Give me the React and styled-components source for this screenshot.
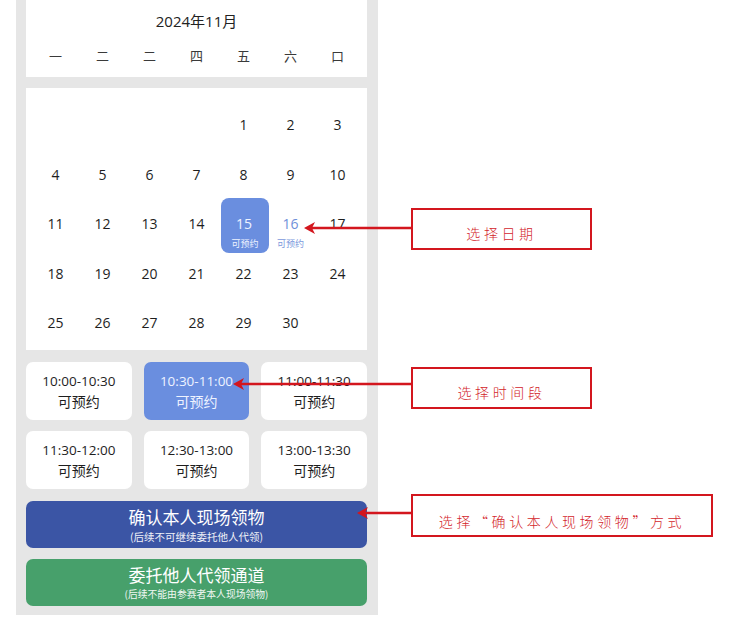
import React from "react";
import styled, { createGlobalStyle } from "styled-components";

const Global = createGlobalStyle`
  html, body { margin: 0; padding: 0; background: #ffffff; }
  body { font-family: "Open Sans", "Noto Sans CJK SC", sans-serif; }
`;

const Page = styled.div`
  position: relative;
  width: 747px;
  height: 627px;
  background: #fff;
`;

const Phone = styled.div`
  margin-left: 16px;
  width: 362px;
  height: 615px;
  box-sizing: border-box;
  background: #e6e6e6;
  padding: 0 11px 0 10px;
  display: flex;
  flex-direction: column;
`;

const HeaderCard = styled.div`
  background: #fff;
  height: 77px;
  box-sizing: border-box;
  padding: 11px 6px 0;
  display: flex;
  flex-direction: column;
  align-items: stretch;
`;

const MonthTitle = styled.div`
  text-align: center;
  font-size: 15px;
  line-height: 20px;
  color: #222;
  font-family: "Open Sans", "Noto Sans CJK SC", sans-serif;
`;

const WeekRow = styled.div`
  margin-top: 15px;
  display: grid;
  grid-template-columns: repeat(7, 47px);
  justify-content: center;
`;

const WeekDay = styled.div`
  text-align: center;
  font-size: 13px;
  line-height: 20px;
  color: #3a3a3a;
  font-family: "Noto Sans CJK SC", sans-serif;
  font-weight: 400;
`;

const CalendarCard = styled.div`
  margin-top: 11px;
  background: #fff;
  height: 262px;
  box-sizing: border-box;
  padding: 12px 6px 0;
`;

const DayGrid = styled.div`
  display: grid;
  grid-template-columns: repeat(7, 47px);
  grid-template-rows: repeat(5, 49.5px);
  justify-content: center;
`;

const DayCell = styled.div`
  display: flex;
  flex-direction: column;
  align-items: center;
`;

const DayBox = styled.div`
  width: 48px;
  height: 55px;
  margin-top: -1px;
  margin-left: ${(p) => (p.$selected ? "3px" : "0")};
  box-sizing: border-box;
  padding-top: 17px;
  border-radius: 8px;
  background: ${(p) => (p.$selected ? "#6a8edf" : "transparent")};
  display: flex;
  flex-direction: column;
  align-items: center;
  flex-shrink: 0;
`;

const DayNum = styled.div`
  font-size: 14px;
  line-height: 18px;
  color: ${(p) => (p.$selected ? "#eef3ff" : p.$avail ? "#6f90d9" : "#1e1e1e")};
  margin-left: ${(p) => (p.$selected ? "-2px" : "0")};
`;

const DaySub = styled.div`
  margin-top: 5px;
  font-size: 9px;
  line-height: 11px;
  font-family: "Noto Sans CJK SC", sans-serif;
  color: ${(p) => (p.$selected ? "#eef3ff" : "#7b98dc")};
  white-space: nowrap;
`;

const SlotGrid = styled.div`
  margin-top: 12px;
  display: grid;
  grid-template-columns: repeat(3, 1fr);
  grid-template-rows: repeat(2, 58px);
  column-gap: 12px;
  row-gap: 11px;
`;

const Slot = styled.div`
  border-radius: 7px;
  background: ${(p) => (p.$selected ? "#6a8edf" : "#fff")};
  color: ${(p) => (p.$selected ? "#eef3ff" : "#1e1e1e")};
  display: flex;
  flex-direction: column;
  align-items: center;
  justify-content: center;
  line-height: 20px;
`;

const SlotTime = styled.div`
  font-size: 13.5px;
  font-family: "Open Sans", "Noto Sans CJK SC", sans-serif;
`;

const SlotState = styled.div`
  font-size: 14px;
  font-family: "Noto Sans CJK SC", sans-serif;
`;

const ActionButton = styled.div`
  margin-top: ${(p) => p.$gap}px;
  height: 47px;
  border-radius: 7px;
  background: ${(p) => p.$bg};
  color: #fff;
  display: flex;
  flex-direction: column;
  align-items: center;
  justify-content: center;
  font-family: "Noto Sans CJK SC", sans-serif;
`;

const ActionTitle = styled.div`
  font-size: 17px;
  line-height: 20px;
`;

const ActionSub = styled.div`
  margin-top: 4px;
  font-size: ${(p) => p.$size}px;
  line-height: 11px;
  opacity: 0.92;
  white-space: nowrap;
`;

const Note = styled.div`
  position: absolute;
  left: ${(p) => p.$x}px;
  top: ${(p) => p.$y}px;
  width: ${(p) => p.$w}px;
  height: ${(p) => p.$h}px;
  box-sizing: border-box;
  border: 2px solid #d3161e;
  background: #fff;
  display: flex;
  align-items: center;
  justify-content: center;
  padding-top: ${(p) => p.$shift}px;
  color: #d3262c;
  font-family: "Noto Sans CJK SC", sans-serif;
  font-weight: 300;
  font-size: 14px;
  letter-spacing: 3.6px;
  white-space: nowrap;
`;

const Arrows = styled.svg`
  position: absolute;
  left: 0;
  top: 0;
  width: 747px;
  height: 627px;
  pointer-events: none;
`;

const weekDays = ["一", "二", "二", "四", "五", "六", "口"];

const days = [
  ...Array(4).fill(null),
  ...Array.from({ length: 30 }, (_, i) => i + 1),
];

const slots = [
  "10:00-10:30",
  "10:30-11:00",
  "11:00-11:30",
  "11:30-12:00",
  "12:30-13:00",
  "13:00-13:30",
];

function Arrow({ tipX, y, toX }) {
  return (
    <g>
      <line x1={tipX + 6} y1={y} x2={toX} y2={y} stroke="#d3161e" strokeWidth="2.6" />
      <polygon
        points={`${tipX},${y} ${tipX + 11},${y - 6} ${tipX + 8},${y} ${tipX + 11},${y + 6}`}
        fill="#d3161e"
      />
    </g>
  );
}

export default function App() {
  return (
    <Page>
      <Global />
      <Phone>
        <HeaderCard>
          <MonthTitle>2024年11月</MonthTitle>
          <WeekRow>
            {weekDays.map((d, i) => (
              <WeekDay key={i}>{d}</WeekDay>
            ))}
          </WeekRow>
        </HeaderCard>
        <CalendarCard>
          <DayGrid>
            {days.map((d, i) => {
              const selected = d === 15;
              const avail = d === 16;
              return (
                <DayCell key={i}>
                  {d && (
                    <DayBox $selected={selected}>
                      <DayNum $selected={selected} $avail={avail}>
                        {d}
                      </DayNum>
                      {(selected || avail) && (
                        <DaySub $selected={selected}>可预约</DaySub>
                      )}
                    </DayBox>
                  )}
                </DayCell>
              );
            })}
          </DayGrid>
        </CalendarCard>
        <SlotGrid>
          {slots.map((s, i) => (
            <Slot key={s} $selected={i === 1}>
              <SlotTime>{s}</SlotTime>
              <SlotState>可预约</SlotState>
            </Slot>
          ))}
        </SlotGrid>
        <ActionButton $bg="#3b55a5" $gap={12}>
          <ActionTitle>确认本人现场领物</ActionTitle>
          <ActionSub $size={10.5}>(后续不可继续委托他人代领)</ActionSub>
        </ActionButton>
        <ActionButton $bg="#47a06b" $gap={11}>
          <ActionTitle>委托他人代领通道</ActionTitle>
          <ActionSub $size={9.8}>(后续不能由参赛者本人现场领物)</ActionSub>
        </ActionButton>
      </Phone>

      <Arrows viewBox="0 0 747 627">
        <Arrow tipX={304} y={228} toX={412} />
        <Arrow tipX={233} y={384} toX={412} />
        <Arrow tipX={357} y={513} toX={412} />
      </Arrows>

      <Note $x={411} $y={208} $w={181} $h={42} $shift={7}>
        选择日期
      </Note>
      <Note $x={411} $y={367} $w={181} $h={42} $shift={8}>
        选择时间段
      </Note>
      <Note $x={411} $y={494} $w={302} $h={43} $shift={11}>
        选择“确认本人现场领物”方式
      </Note>
    </Page>
  );
}
